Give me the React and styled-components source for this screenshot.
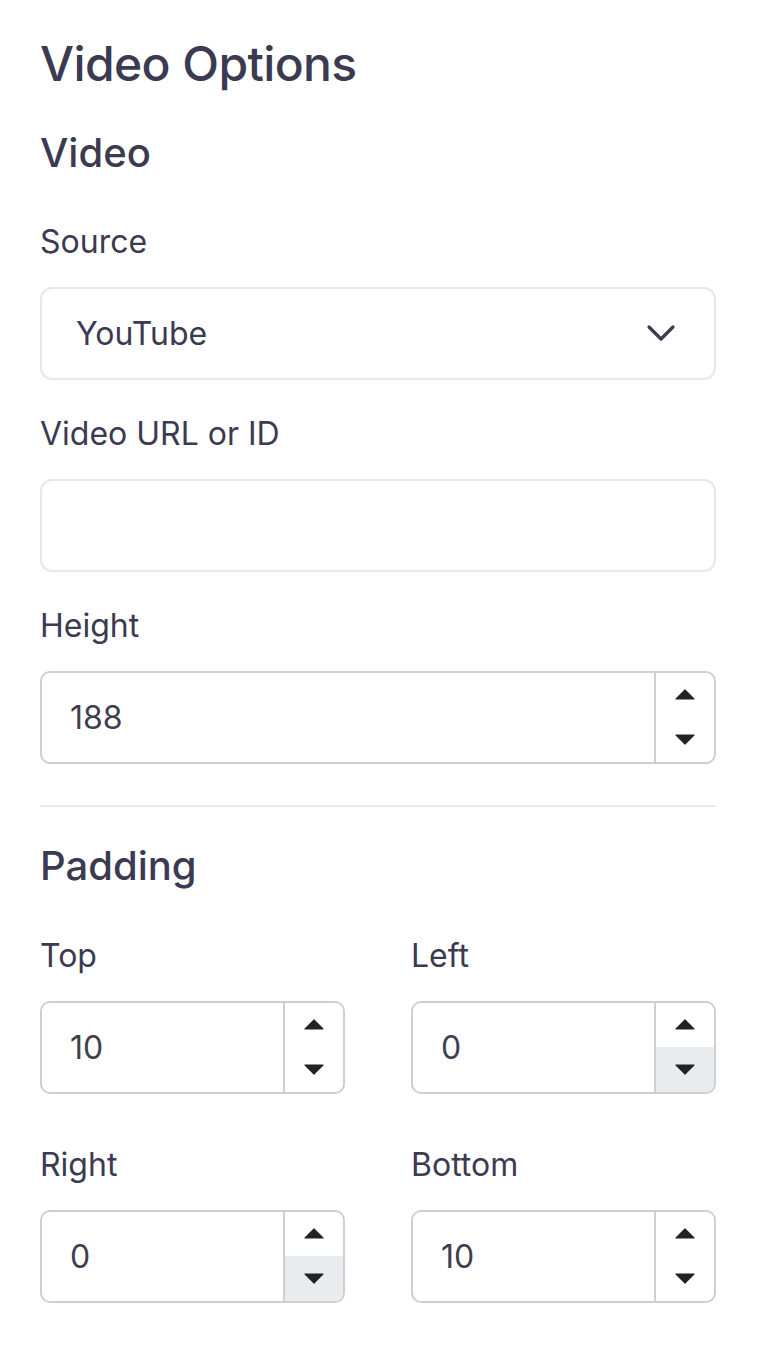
import React from 'react';
import styled, { createGlobalStyle } from 'styled-components';

const GlobalStyle = createGlobalStyle`
	body {
		margin: 0;
		background: #ffffff;
		font-family: Inter, "Noto Sans", sans-serif;
		color: #3c3a50;
	}
`;

const Panel = styled.div`
	width: 676px;
	padding: 35px 40px 40px;
`;

const Title = styled.h2`
	margin: 0;
	font-size: 48px;
	line-height: 1.2;
	font-weight: 500;
	letter-spacing: -0.6px;
`;

const SectionTitle = styled.h3`
	margin: ${props => props.top || 36}px 0 0;
	font-size: 40px;
	line-height: 1.2;
	font-weight: 500;
`;

const Field = styled.div`
	margin-top: ${props => props.top || 30}px;
`;

const Label = styled.label`
	display: block;
	font-size: 32px;
	line-height: 48px;
	margin-bottom: 21px;
`;

const Box = styled.div`
	box-sizing: border-box;
	height: 93px;
	border: 2px solid #e6e5f0;
	border-radius: 12px;
	display: flex;
	align-items: center;
	justify-content: space-between;
	padding: 0 38px 0 34px;
	font-size: 32px;
`;

const Chevron = () => (
	<svg width="30" height="18" viewBox="0 0 30 18">
		<path d="M3 3 L15 15 L27 3" fill="none" stroke="#3c3a50" strokeWidth="3.2" strokeLinecap="round" strokeLinejoin="round" />
	</svg>
);

const Divider = styled.hr`
	margin: 41px 0 0;
	border: none;
	border-top: 2px solid #e8e8ee;
`;

const Grid = styled.div`
	display: grid;
	grid-template-columns: 1fr 1fr;
	column-gap: 66px;
	row-gap: 47px;
	margin-top: 42px;
`;

const NumberBox = styled.div`
	box-sizing: border-box;
	height: 93px;
	border: 2px solid #cfcfcf;
	border-radius: 10px;
	display: flex;
	overflow: hidden;
`;

const NumberValue = styled.div`
	flex: 1;
	display: flex;
	align-items: center;
	padding-left: 28px;
	font-size: 32px;
	color: #3f3e4f;
`;

const Spinner = styled.div`
	width: 58px;
	border-left: 2px solid #cfcfcf;
	display: flex;
	flex-direction: column;
`;

const SpinButton = styled.div`
	flex: 1;
	display: flex;
	align-items: center;
	justify-content: center;
	background: ${props => (props.hover ? '#e9ecef' : 'transparent')};
`;

const Arrow = ({ down }) => (
	<svg width="20" height="11" viewBox="0 0 20 11">
		<path
			d={down ? 'M1 1 L19 1 L10 10 Z' : 'M1 10 L19 10 L10 1 Z'}
			fill="#212327"
			stroke="#212327"
			strokeWidth="1.2"
			strokeLinejoin="round"
		/>
	</svg>
);

const NumberInput = ({ value, hoverDown }) => (
	<NumberBox>
		<NumberValue>{value}</NumberValue>
		<Spinner>
			<SpinButton>
				<Arrow />
			</SpinButton>
			<SpinButton hover={hoverDown}>
				<Arrow down />
			</SpinButton>
		</Spinner>
	</NumberBox>
);

const padding = [
	{ label: 'Top', value: 10 },
	{ label: 'Left', value: 0, hoverDown: true },
	{ label: 'Right', value: 0, hoverDown: true },
	{ label: 'Bottom', value: 10 }
];

const App = () => (
	<>
		<GlobalStyle />
		<Panel>
			<Title>Video Options</Title>
			<SectionTitle>Video</SectionTitle>
			<Field top={41}>
				<Label>Source</Label>
				<Box>
					YouTube
					<Chevron />
				</Box>
			</Field>
			<Field>
				<Label>Video URL or ID</Label>
				<Box />
			</Field>
			<Field>
				<Label>Height</Label>
				<NumberInput value={188} />
			</Field>
			<Divider />
			<SectionTitle top={35}>Padding</SectionTitle>
			<Grid>
				{padding.map(item => (
					<div key={item.label}>
						<Label>{item.label}</Label>
						<NumberInput value={item.value} hoverDown={item.hoverDown} />
					</div>
				))}
			</Grid>
		</Panel>
	</>
);

export default App;
